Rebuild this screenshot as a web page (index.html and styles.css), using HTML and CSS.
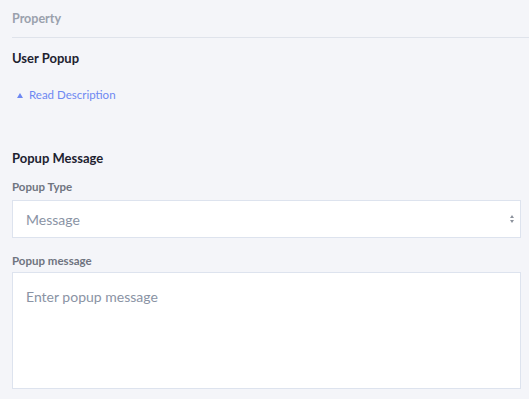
FILE: index.html
```html
<!DOCTYPE html>
<html>
<head>
<meta charset="utf-8">
<link rel="stylesheet" href="styles.css">
</head>
<body>
<div class="panel">
  <div class="header">Property</div>
  <div class="content">
    <h2 class="title">User Popup</h2>
    <a class="desc-link"><span class="tri"></span>Read Description</a>
    <h3 class="section">Popup Message</h3>
    <label class="label">Popup Type</label>
    <div class="select">
      <span class="select-value">Message</span>
      <span class="arrows"><span class="up"></span><span class="down"></span></span>
    </div>
    <label class="label label-msg">Popup message</label>
    <div class="textarea"><span class="placeholder">Enter popup message</span></div>
  </div>
</div>
</body>
</html>
```
FILE: styles.css
```css
html, body {
  margin: 0;
  padding: 0;
  background: #f4f5f9;
  font-family: Lato, "Open Sans", sans-serif;
}
.panel {
  width: 529px;
  height: 399px;
  padding-left: 12px;
  box-sizing: border-box;
  overflow: hidden;
}
.header {
  height: 38px;
  box-sizing: border-box;
  border-bottom: 1px solid #dfe3eb;
  font-size: 12.5px;
  font-weight: 700;
  color: #9aa1ad;
  line-height: 38px;
}
.content {
  padding-right: 8px;
}
.title {
  margin: 0;
  padding-top: 11px;
  font-size: 13px;
  font-weight: 700;
  color: #1d2230;
  line-height: 18px;
}
.desc-link {
  display: flex;
  align-items: center;
  margin-top: 20px;
  padding-left: 5px;
  font-size: 11.5px;
  color: #6e88f2;
  line-height: 16px;
  height: 16px;
}
.tri {
  width: 0;
  height: 0;
  border-left: 3px solid transparent;
  border-right: 3px solid transparent;
  border-bottom: 5px solid #6e88f2;
  margin-right: 6px;
}
.section {
  margin: 0;
  padding-top: 46px;
  font-size: 13px;
  font-weight: 700;
  color: #1d2230;
  line-height: 18px;
}
.label {
  display: block;
  margin-top: 13px;
  font-size: 11.5px;
  font-weight: 700;
  color: #6f7480;
  line-height: 14px;
}
.select {
  margin-top: 6px;
  height: 38px;
  box-sizing: border-box;
  background: #fff;
  border: 1px solid #dde3ee;
  display: flex;
  align-items: center;
  justify-content: space-between;
  padding: 0 6px 0 13px;
}
.select-value, .placeholder {
  font-size: 14px;
  color: #8a93a4;
}
.arrows {
  display: flex;
  flex-direction: column;
  gap: 2px;
}
.up, .down {
  width: 0;
  height: 0;
  border-left: 2.5px solid transparent;
  border-right: 2.5px solid transparent;
}
.up { border-bottom: 3px solid #8c929c; }
.down { border-top: 3px solid #8c929c; }
.label-msg {
  margin-top: 16px;
}
.textarea {
  margin-top: 4px;
  height: 117px;
  box-sizing: border-box;
  background: #fff;
  border: 1px solid #dde3ee;
  padding: 14px 13px;
  line-height: 18px;
}
```
